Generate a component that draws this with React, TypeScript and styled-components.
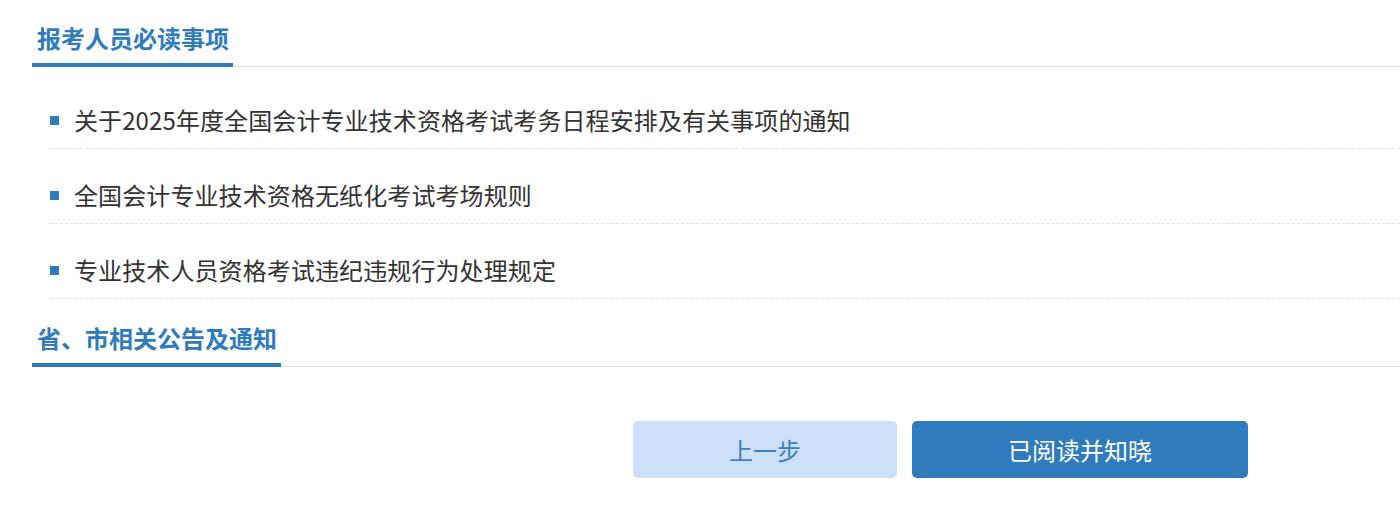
import React from 'react';
import styled, { createGlobalStyle } from 'styled-components';

const GlobalStyle = createGlobalStyle`
  html, body {
    margin: 0;
    padding: 0;
    background: #ffffff;
    overflow-x: hidden;
  }
  body {
    font-family: "Noto Sans CJK SC", "Noto Sans", sans-serif;
    color: #333333;
  }
`;

const Page = styled.div`
  padding: 18px 0 0 32px;
`;

const SectionHead = styled.div<{ $gap?: number }>`
  display: flex;
  border-bottom: 1px solid #dddddd;
  margin-top: ${(p) => p.$gap ?? 0}px;
`;

const SectionTitle = styled.h2`
  margin: 0 0 -1px;
  padding: 0 4px 5px 5px;
  font-size: 24px;
  line-height: 40px;
  font-weight: 700;
  color: #2f7bbd;
  border-bottom: 4px solid #2f7bbd;
`;

const NoticeList = styled.ul`
  list-style: none;
  margin: 7px 0 0;
  padding: 0 0 0 18px;
`;

const NoticeItem = styled.li`
  display: flex;
  align-items: center;
  gap: 15px;
  padding: 34px 0 16px;
  border-bottom: 1px dashed #e3e3e3;
  font-size: 24px;
  line-height: 24px;
  letter-spacing: 0.1px;
  color: #333333;
`;

const Bullet = styled.span`
  width: 9px;
  height: 9px;
  background: #2f7bbd;
  flex: none;
`;

const ButtonBar = styled.div`
  display: flex;
  gap: 15px;
  margin: 54px 0 0 601px;
`;

const ActionButton = styled.button<{ $primary?: boolean; $width: number }>`
  width: ${(p) => p.$width}px;
  height: 57px;
  border: none;
  border-radius: 5px;
  font-family: "Noto Sans CJK SC", "Noto Sans", sans-serif;
  font-size: 24px;
  cursor: pointer;
  background: ${(p) => (p.$primary ? '#2f7bbd' : '#cce0f8')};
  color: ${(p) => (p.$primary ? '#ffffff' : '#3f7fbf')};
`;

const notices = [
  '关于2025年度全国会计专业技术资格考试考务日程安排及有关事项的通知',
  '全国会计专业技术资格无纸化考试考场规则',
  '专业技术人员资格考试违纪违规行为处理规定',
];

export default function App() {
  return (
    <>
      <GlobalStyle />
      <Page>
        <SectionHead>
          <SectionTitle>报考人员必读事项</SectionTitle>
        </SectionHead>
        <NoticeList>
          {notices.map((n) => (
            <NoticeItem key={n}>
              <Bullet />
              {n}
            </NoticeItem>
          ))}
        </NoticeList>
        <SectionHead $gap={19}>
          <SectionTitle>省、市相关公告及通知</SectionTitle>
        </SectionHead>
        <ButtonBar>
          <ActionButton $width={264}>上一步</ActionButton>
          <ActionButton $width={336} $primary>
            已阅读并知晓
          </ActionButton>
        </ButtonBar>
      </Page>
    </>
  );
}
